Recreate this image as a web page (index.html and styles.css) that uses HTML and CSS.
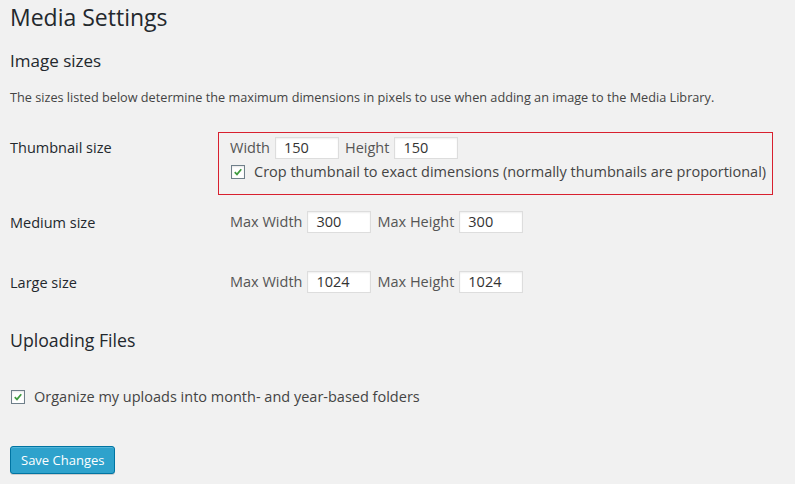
FILE: index.html
```html
<!DOCTYPE html>
<html>
<head>
<meta charset="utf-8">
<link rel="stylesheet" href="styles.css">
</head>
<body>
<div class="wrap">
  <h1 class="title">Media Settings</h1>
  <h2 class="section">Image sizes</h2>
  <p class="desc">The sizes listed below determine the maximum dimensions in pixels to use when adding an image to the Media Library.</p>

  <div class="row row-thumb">
    <div class="th">Thumbnail size</div>
    <div class="td boxed">
      <div class="fields">
        <span class="lbl">Width</span><span class="input">150</span>
        <span class="lbl">Height</span><span class="input">150</span>
      </div>
      <div class="check-line crop">
        <span class="check"><svg viewBox="0 0 14 14" width="14" height="14"><path d="M3.2 7.2 L5.8 9.8 L10.8 3.8" fill="none" stroke="#3f9b3f" stroke-width="2"/></svg></span>
        <span class="check-text">Crop thumbnail to exact dimensions (normally thumbnails are proportional)</span>
      </div>
    </div>
  </div>

  <div class="row row-medium">
    <div class="th">Medium size</div>
    <div class="td">
      <div class="fields">
        <span class="lbl">Max Width</span><span class="input">300</span>
        <span class="lbl">Max Height</span><span class="input">300</span>
      </div>
    </div>
  </div>

  <div class="row row-large">
    <div class="th">Large size</div>
    <div class="td">
      <div class="fields">
        <span class="lbl">Max Width</span><span class="input">1024</span>
        <span class="lbl">Max Height</span><span class="input">1024</span>
      </div>
    </div>
  </div>

  <h2 class="section upload">Uploading Files</h2>

  <div class="check-line organize">
    <span class="check"><svg viewBox="0 0 14 14" width="14" height="14"><path d="M3.2 7.2 L5.8 9.8 L10.8 3.8" fill="none" stroke="#3f9b3f" stroke-width="2"/></svg></span>
    <span class="check-text">Organize my uploads into month- and year-based folders</span>
  </div>

  <button class="save">Save Changes</button>
</div>
</body>
</html>
```

FILE: styles.css
```css
html, body {
  margin: 0;
  padding: 0;
  background: #f1f1f1;
}
body {
  font-family: "Open Sans", "Liberation Sans", sans-serif;
  color: #444;
  font-size: 14.5px;
  width: 795px;
  height: 484px;
  overflow: hidden;
}
.wrap {
  padding: 0 10px;
}
.title {
  margin: 0;
  padding-top: 3px;
  font-size: 23px;
  line-height: 29px;
  font-weight: 400;
  color: #23282d;
}
.section {
  margin: 18px 0 0;
  font-size: 17px;
  line-height: 22px;
  font-weight: 400;
  color: #23282d;
}
.desc {
  margin: 15px 0 0;
  font-size: 12.7px;
  line-height: 20px;
  color: #444;
}
.row {
  display: flex;
  align-items: flex-start;
}
.th {
  width: 208px;
  flex: none;
  line-height: 20px;
  color: #23282d;
}
.td {
  padding-left: 12px;
}
.row-thumb {
  margin-top: 25px;
}
.row-thumb .th {
  padding-top: 6px;
}
.boxed {
  box-sizing: border-box;
  border: 1px solid #d8202f;
  padding: 4px 6px 12px 11px;
  width: 555px;
}
.row-medium {
  margin-top: 16px;
}
.row-medium .th,
.row-large .th {
  padding-top: 2px;
}
.row-large {
  margin-top: 38px;
}
.fields {
  display: flex;
  align-items: center;
  height: 22px;
}
.lbl {
  color: #555;
  margin-right: 5px;
  line-height: 20px;
}
.input {
  box-sizing: border-box;
  width: 64px;
  height: 22px;
  line-height: 20px;
  background: #fff;
  border: 1px solid #ddd;
  box-shadow: inset 0 1px 2px rgba(0,0,0,.07);
  padding: 0 8px;
  color: #333;
  margin-right: 6px;
}
.check-line {
  display: flex;
  align-items: center;
  height: 20px;
  white-space: nowrap;
}
.crop {
  margin-top: 3px;
}
.check {
  box-sizing: border-box;
  width: 14px;
  height: 14px;
  flex: none;
  border: 1px solid #6f7f8a;
  background: #fff;
  box-shadow: inset 0 1px 2px rgba(0,0,0,.1);
  display: flex;
  align-items: center;
  justify-content: center;
  margin-right: 9px;
  margin-left: 1px;
}
.check svg {
  display: block;
  width: 12px;
  height: 12px;
}
.check-text {
  line-height: 20px;
  color: #444;
  white-space: nowrap;
}
.upload {
  margin-top: 36px;
  font-size: 17.7px;
}
.organize {
  margin-top: 36px;
}
.save {
  display: block;
  margin-top: 39px;
  box-sizing: border-box;
  height: 28px;
  padding: 0 10px;
  white-space: nowrap;
  background: #2ea2cc;
  border: 1px solid #0074a2;
  border-radius: 3px;
  color: #fff;
  font-family: "Open Sans", "Liberation Sans", sans-serif;
  font-size: 13px;
  line-height: 26px;
  box-shadow: inset 0 1px 0 rgba(120,200,230,.5), 0 1px 0 rgba(0,0,0,.15);
}
```
